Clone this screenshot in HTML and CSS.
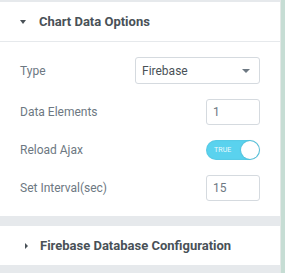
FILE: index.html
```html
<!DOCTYPE html>
<html>
<head>
<meta charset="utf-8">
<link rel="stylesheet" href="styles.css">
</head>
<body>
<div class="frame">
  <div class="panel">
    <div class="strip"></div>
    <div class="section">
      <div class="sec-head open">
        <span class="caret-down"></span>
        <span class="sec-title">Chart Data Options</span>
      </div>
      <div class="controls">
        <div class="row r1">
          <span class="label">Type</span>
          <div class="select"><span>Firebase</span><span class="sel-caret"></span></div>
        </div>
        <div class="row r2">
          <span class="label">Data Elements</span>
          <div class="input">1</div>
        </div>
        <div class="row r3">
          <span class="label">Reload Ajax</span>
          <div class="toggle"><span class="tog-text">TRUE</span><span class="knob"></span></div>
        </div>
        <div class="row r4">
          <span class="label">Set Interval(sec)</span>
          <div class="input">15</div>
        </div>
      </div>
    </div>
    <div class="gap"></div>
    <div class="section">
      <div class="sec-head">
        <span class="caret-right"></span>
        <span class="sec-title">Firebase Database Configuration</span>
      </div>
    </div>
  </div>
  <div class="divider"></div>
  <div class="scroll"></div>
</div>
</body>
</html>
```

FILE: styles.css
```css
html, body {
  margin: 0;
  padding: 0;
}
body {
  font-family: Roboto, "Liberation Sans", sans-serif;
  background: #e6e9ec;
  width: 285px;
  height: 273px;
  overflow: hidden;
}
.frame {
  display: flex;
  height: 273px;
}
.panel {
  width: 280px;
  background: #e6e9ec;
  display: flex;
  flex-direction: column;
}
.divider {
  width: 1px;
  background: #e3e8e6;
}
.scroll {
  flex: 1;
  background: #c6ddd4;
}
.strip {
  height: 2px;
  background: #e6e9ec;
}
.section {
  background: #fff;
}
.sec-head {
  height: 39px;
  display: flex;
  align-items: center;
  padding-left: 20px;
}
.sec-head.open {
  border-bottom: 1px solid #e6e9ec;
}
.caret-down {
  width: 0;
  height: 0;
  border-left: 3.5px solid transparent;
  border-right: 3.5px solid transparent;
  border-top: 4px solid #495157;
  margin-right: 13px;
}
.caret-right {
  width: 0;
  height: 0;
  border-top: 3.5px solid transparent;
  border-bottom: 3.5px solid transparent;
  border-left: 3px solid #495157;
  margin-left: 5px;
  margin-right: 12px;
}
.sec-title {
  font-size: 13px;
  font-weight: 700;
  color: #495157;
}
.controls {
  display: grid;
  grid-template-rows: 27px 26px 20px 26px;
  row-gap: 15px;
  padding: 15px 20px 15px 20px;
}
.row {
  display: flex;
  align-items: center;
  justify-content: space-between;
}
.label {
  font-size: 12px;
  color: #6d7882;
}
.select {
  box-sizing: border-box;
  width: 125px;
  height: 27px;
  border: 1px solid #d5dadf;
  border-radius: 3px;
  display: flex;
  align-items: center;
  justify-content: space-between;
  padding: 0 9px 0 6px;
  font-size: 12px;
  color: #495157;
}
.sel-caret {
  width: 0;
  height: 0;
  border-left: 4px solid transparent;
  border-right: 4px solid transparent;
  border-top: 4px solid #6d7882;
}
.input {
  box-sizing: border-box;
  width: 54px;
  height: 100%;
  border: 1px solid #d5dadf;
  border-radius: 3px;
  display: flex;
  align-items: center;
  padding-left: 6px;
  font-size: 12px;
  color: #6d7882;
}
.toggle {
  position: relative;
  width: 54px;
  height: 20px;
  border-radius: 10px;
  background: #5ad2ee;
  box-shadow: inset 0 0 2px rgba(0,0,0,0.12);
  display: flex;
  align-items: center;
}
.tog-text {
  font-size: 7px;
  color: #eaf9fd;
  margin-left: 8px;
  letter-spacing: 0.1px;
}
.knob {
  position: absolute;
  right: 1px;
  top: 1px;
  width: 18px;
  height: 18px;
  border-radius: 50%;
  background: #fff;
  box-shadow: 0 0 2px rgba(0,0,0,0.2);
}
.gap {
  height: 10px;
  background: #e6e9ec;
}
```
